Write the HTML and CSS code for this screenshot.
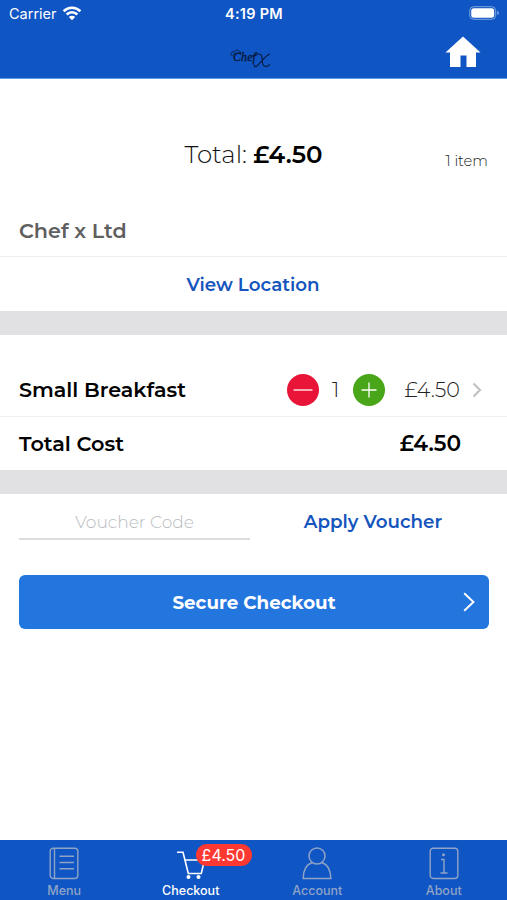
FILE: index.html
```html
<!DOCTYPE html>
<html lang="en">
<head>
<meta charset="utf-8">
<meta name="viewport" content="width=device-width">
<title>Checkout</title>
<link rel="stylesheet" href="styles.css">
</head>
<body>
<div class="app">
  <header class="header">
    <div class="status">
      <div class="carrier"><span>Carrier</span>
        <svg width="20" height="15" viewBox="0 0 20 15" fill="none" stroke="#fff" stroke-width="2.6"><path d="M1.6 5.2a12 12 0 0 1 16.8 0M4.7 8.5a7.5 7.5 0 0 1 10.6 0"/><path d="M10 14.2L6.8 11a4.5 4.5 0 0 1 6.4 0z" fill="#fff" stroke="none"/></svg>
      </div>
      <time>4:19 PM</time>
      <svg class="battery" width="31" height="14" viewBox="0 0 31 14"><rect x=".7" y=".7" width="26" height="12.6" rx="4" fill="none" stroke="#fff" stroke-opacity=".45"/><rect x="2.2" y="2.3" width="23" height="9.4" rx="2.6" fill="#fff"/><path d="M28.3 4.8c2 .7 2 3.7 0 4.4z" fill="#fff" fill-opacity=".5"/></svg>
    </div>
    <div class="titlebar">
      <div class="logo">
        <svg class="hat" width="12" height="9" viewBox="0 0 12 9" fill="none" stroke="#071a3d" stroke-width=".8"><path d="M3 7C-1 6 1 2 4 3c1-3 7-2 6 1M3 5.5c2-2 5-1 8-2"/></svg>
        <span class="logo-text">Chef</span>
        <svg class="flourish" width="19" height="15" viewBox="0 0 19 15" fill="none" stroke="#071a3d" stroke-width="1.1" stroke-linecap="round"><path d="M1 3.5C6-.5 10 .5 10 5s1 8.500 4 8.500c2 0 3-1 3.500-2M17.500 1C13 3.500 9 9 5 13c-2 1.500-3.500.5-2.500-1"/></svg>
      </div>
      <svg class="home" width="36" height="32" viewBox="0 0 36 32" fill="#fff"><path d="M18 .5L35.500 16.500H31V31H21.500V19.500h-6V31H5V16.500H.5z"/></svg>
    </div>
  </header>
  <main>
    <section class="summary"><div class="total"><span class="total-label">Total:</span> <b>£4.50</b></div><span class="count">1 item</span></section>
    <section class="vendor"><h1>Chef x Ltd</h1></section>
    <a class="location"><span>View Location</span></a>
    <div class="band"></div>
    <section class="item">
      <span class="name">Small Breakfast</span>
      <svg class="minus" width="32" height="32" viewBox="0 0 32 32"><circle cx="16" cy="16" r="16" fill="#e91538"/><path d="M6.500 16h19" stroke="#fff" stroke-width="1.300"/></svg>
      <span class="qty">1</span>
      <svg class="plus" width="32" height="32" viewBox="0 0 32 32"><circle cx="16" cy="16" r="16" fill="#4aa619"/><path d="M8.500 16h15M16 8.500v15" stroke="#fff" stroke-width="1.300"/></svg>
      <span class="price">£4.50</span>
      <svg class="chev" width="10" height="16" viewBox="0 0 10 16" fill="none" stroke="#c2c2c4" stroke-width="2.200"><path d="M1.500 1.500L8 8l-6.500 6.500"/></svg>
    </section>
    <section class="cost"><span class="cost-label">Total Cost</span><b>£4.50</b></section>
    <div class="band"></div>
    <section class="voucher"><div class="code"><span>Voucher Code</span></div><a class="apply"><span>Apply Voucher</span></a></section>
    <div class="pay"><span>Secure Checkout</span>
      <svg width="12" height="20" viewBox="0 0 12 20" fill="none" stroke="#fff" stroke-width="1.900"><path d="M1.200 1.200L10.500 10l-9.300 8.800"/></svg>
    </div>
  </main>
  <nav class="tabs">
    <a class="tab"><svg width="30" height="33" viewBox="0 0 30 33" fill="none" stroke="currentColor" stroke-width="1.400"><rect x="1.200" y="1.200" width="27.600" height="30.300" rx="3"/><path d="M5.500 1.200v30.300M10.500 9.300H25M10.500 15.500H25M10.500 21.700H25"/></svg><span>Menu</span></a>
    <a class="tab active"><svg width="30" height="33" viewBox="0 0 30 33" fill="none" stroke="currentColor" stroke-width="1.600"><path d="M1 5.300H7l5.300 21.200h13L28.500 13H9.200"/><circle cx="12.500" cy="30" r="2" fill="currentColor" stroke="none"/><circle cx="22.500" cy="30" r="2" fill="currentColor" stroke="none"/></svg><span>Checkout</span><i class="badge">£4.50</i></a>
    <a class="tab"><svg width="30" height="33" viewBox="0 0 30 33" fill="none" stroke="currentColor" stroke-width="1.500"><circle cx="15" cy="9" r="8"/><path d="M10.300 15.500C4 17.500 1.200 22 1.200 31.500h27.600c0-9.500-2.800-14-9.100-16"/></svg><span>Account</span></a>
    <a class="tab"><svg width="30" height="33" viewBox="0 0 30 33" fill="none" stroke="currentColor" stroke-width="1.400"><rect x="1.200" y="1.200" width="27.600" height="30.300" rx="3"/><path d="M12 12.500h3V26M11.500 26h7"/><circle cx="14.500" cy="7.800" r="1.500" fill="currentColor" stroke="none"/></svg><span>About</span></a>
  </nav>
</div>
</body>
</html>
```
FILE: styles.css
```css
*{box-sizing:border-box}
body{margin:0;font-family:Montserrat,Inter,sans-serif;background:#fff;color:#000}
.app{height:900px;display:flex;flex-direction:column;overflow:hidden}
span,b,time,h1{white-space:nowrap}
svg{flex:none;display:block}
.header{height:79px;background:#1055c4;border-bottom:1px solid #5c9be6;color:#fff;font-family:Inter,sans-serif}
.status{height:28px;display:grid;grid-template-columns:1fr auto 1fr;align-items:center;padding:0 7px 1px 9px;font-size:14.5px}
.carrier{display:flex;align-items:center;gap:5px}
.carrier svg{margin-top:-1px}
.status time{font-weight:600;letter-spacing:.25px;margin-left:-1px}
.battery{justify-self:end;margin-top:-1px}
.titlebar{height:50px;display:grid;grid-template-columns:1fr auto 1fr;align-items:center;padding:0 26px}
.logo{grid-column:2;display:flex;align-items:center;color:#061839;font-family:"Liberation Serif",serif;font-style:italic;margin:9px 6px 0 0}
.hat{margin:-9px -9px 0 0}
.logo-text{font-size:12px;letter-spacing:.1px;-webkit-text-stroke:.3px #061839}
.flourish{margin:5px 0 0 -4px}
.home{justify-self:end;margin-top:-3px}
main{flex:1}
.summary{height:125px;display:grid;grid-template-columns:1fr auto 1fr;align-items:center;padding:25px 19px 0}
.total{grid-column:2;font-size:24.5px;font-weight:300;color:#111}
.total b{font-weight:600;color:#000}
.count{justify-self:end;font-size:14.7px;font-weight:300;color:#222;padding-top:14px}
.vendor{height:53px;border-bottom:1px solid #eee;padding:0 19px;display:flex;align-items:center}
h1{margin:0;font-size:20.7px;font-weight:600;color:#5f5f5f}
.location{height:54px;display:flex;align-items:center;justify-content:center;color:#1555bd;font-size:18.3px;font-weight:600;padding-right:1px}
.band{height:24.4px;background:#e1e1e3}
.item{height:81.4px;border-bottom:1px solid #f0f0f0;padding:28px 25px 0 19px;display:flex;align-items:center;font-size:20.7px;font-weight:300;color:#222}
.name{font-weight:600;color:#000;flex:1}
.qty{width:34px;text-align:center}
.price{margin-left:20px}
.chev{margin-left:12px}
.cost{height:53px;display:flex;justify-content:space-between;align-items:center;padding:0 46px 0 19px;font-size:20.8px;font-weight:600}
.cost b{font-weight:600;font-size:21.7px}
.voucher{height:46px;display:flex;padding-left:19px}
.code{width:231px;border-bottom:2px solid #dcdde0;display:flex;align-items:center;justify-content:center;color:#b9bcc1;font-size:17.1px;font-weight:300;padding-top:10px}
.apply{flex:1;display:flex;align-items:center;justify-content:center;color:#1555bd;font-size:18.3px;font-weight:600;padding:9px 11px 0 0}
.pay{margin:35px 18px 0 19px;height:54px;border-radius:6px;background:#2476df;color:#fff;display:grid;grid-template-columns:1fr auto 1fr;align-items:center;padding:0 14px;font-size:18.3px;font-weight:700}
.pay span{grid-column:2}
.pay svg{justify-self:end}
.tabs{height:60px;background:#1055c4;display:grid;grid-template-columns:repeat(4,1fr);padding-left:1px;color:#8fa3c6;font-family:Inter,sans-serif;font-size:12.5px;font-weight:500}
.tab{display:flex;flex-direction:column;align-items:center;position:relative;padding-top:7px;gap:3px}
.active{color:#fff}
.badge{position:absolute;left:68px;top:4px;width:56px;height:22px;border-radius:11px;background:#ff3932;color:#fff;font-style:normal;font-size:16px;font-weight:400;line-height:22px;text-align:center}
```
